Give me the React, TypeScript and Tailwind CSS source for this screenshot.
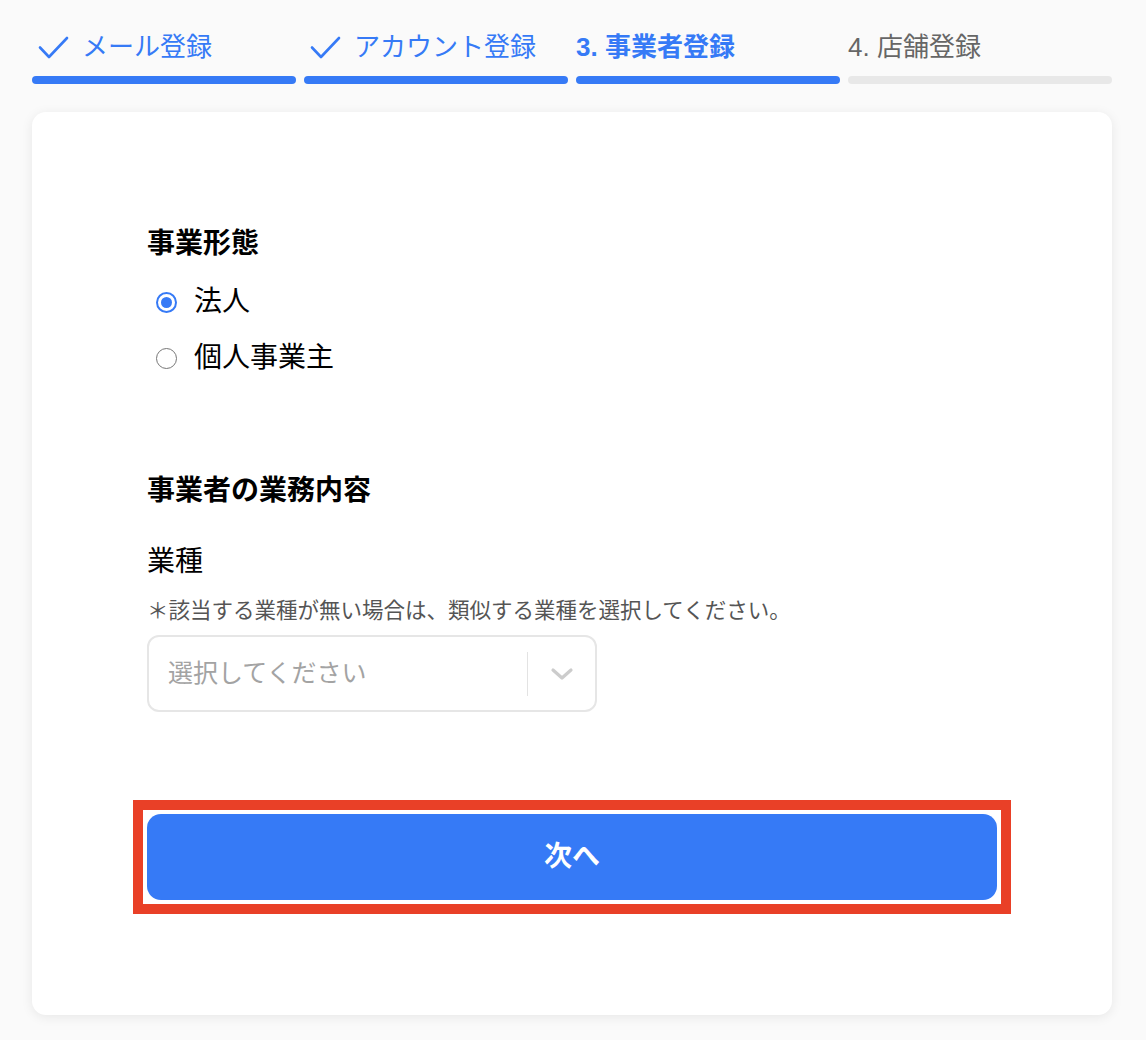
import React from "react";

const FONT = '"Liberation Sans", "Noto Sans CJK JP", sans-serif';

type Step = { label: string; state: "done" | "current" | "todo" };

const steps: Step[] = [
  { label: "メール登録", state: "done" },
  { label: "アカウント登録", state: "done" },
  { label: "3. 事業者登録", state: "current" },
  { label: "4. 店舗登録", state: "todo" },
];

function CheckMark() {
  return (
    <svg width="32" height="24" viewBox="0 0 32 24" className="ml-[6px] shrink-0" fill="none">
      <path d="M2 12.5 11 22 29 3" stroke="#367af6" strokeWidth="2.6" strokeLinecap="round" strokeLinejoin="round" />
    </svg>
  );
}

function StepBar() {
  return (
    <div className="grid grid-cols-4 gap-2">
      {steps.map((step) => (
        <div key={step.label}>
          <div
            className={
              step.state === "todo"
                ? "flex h-9 items-center gap-3 text-[26px] leading-9 text-[#666666]"
                : step.state === "current"
                  ? "flex h-9 items-center gap-3 text-[26px] leading-9 font-bold text-[#367af6]"
                  : "flex h-9 items-center gap-3 text-[26px] leading-9 text-[#367af6]"
            }
          >
            {step.state === "done" && <CheckMark />}
            <span>{step.label}</span>
          </div>
          <div
            className={
              step.state === "todo"
                ? "mt-[11px] h-2 rounded-full bg-[#e8e8e8]"
                : "mt-[11px] h-2 rounded-full bg-[#367af6]"
            }
          />
        </div>
      ))}
    </div>
  );
}

function Radio({ label, checked }: { label: string; checked?: boolean }) {
  return (
    <label className="flex h-14 items-center gap-[17px] pl-[9px]">
      {checked ? (
        <span className="flex h-[21px] w-[21px] items-center justify-center rounded-full border-2 border-[#367af6] bg-white">
          <span className="h-[11px] w-[11px] rounded-full bg-[#367af6]" />
        </span>
      ) : (
        <span className="h-[21px] w-[21px] rounded-full border-[1.5px] border-[#767676] bg-white" />
      )}
      <span className="text-[28px] leading-10 text-black">{label}</span>
    </label>
  );
}

function Select() {
  return (
    <div className="mt-[9px] flex h-[77px] w-[450px] items-center rounded-[12px] border-2 border-[#e6e6e6] bg-white">
      <span className="flex-1 pl-[19px] text-[25px] text-[#a3a3a3]">選択してください</span>
      <span className="h-[44px] w-px bg-[#e3e3e3]" />
      <span className="flex w-[67px] justify-center">
        <svg width="24" height="14" viewBox="0 0 24 14" fill="none">
          <path d="M3 3 12 11 21 3" stroke="#cccccc" strokeWidth="3.2" strokeLinecap="round" strokeLinejoin="round" />
        </svg>
      </span>
    </div>
  );
}

export default function App() {
  return (
    <div className="min-h-screen bg-[#fafafa] pt-[29px] pb-6" style={{ fontFamily: FONT }}>
      <div className="ml-8 w-[1080px]">
        <StepBar />

        <div className="mt-7 rounded-[14px] bg-white px-[115px] pt-[112px] pb-[101px] shadow-[0_2px_12px_rgba(0,0,0,0.08)]">
          <h2 className="text-[28px] leading-10 font-bold text-black">事業形態</h2>
          <div className="mt-[10px]">
            <Radio label="法人" checked />
            <Radio label="個人事業主" />
          </div>

          <h2 className="mt-[85px] text-[28px] leading-10 font-bold text-black">事業者の業務内容</h2>
          <p className="mt-[31px] text-[28px] leading-10 text-black">業種</p>
          <p className="mt-[14px] text-[21.5px] leading-[30px] text-[#555555]">＊該当する業種が無い場合は、類似する業種を選択してください。</p>
          <Select />

          <div className="mt-[88px] -mx-[14px] border-[10px] border-[#e94027] p-1">
            <button
              type="button"
              className="flex h-[86px] w-full items-center justify-center rounded-[14px] bg-[#367af6] text-[28px] font-bold text-white"
            >
              次へ
            </button>
          </div>
        </div>
      </div>
    </div>
  );
}
